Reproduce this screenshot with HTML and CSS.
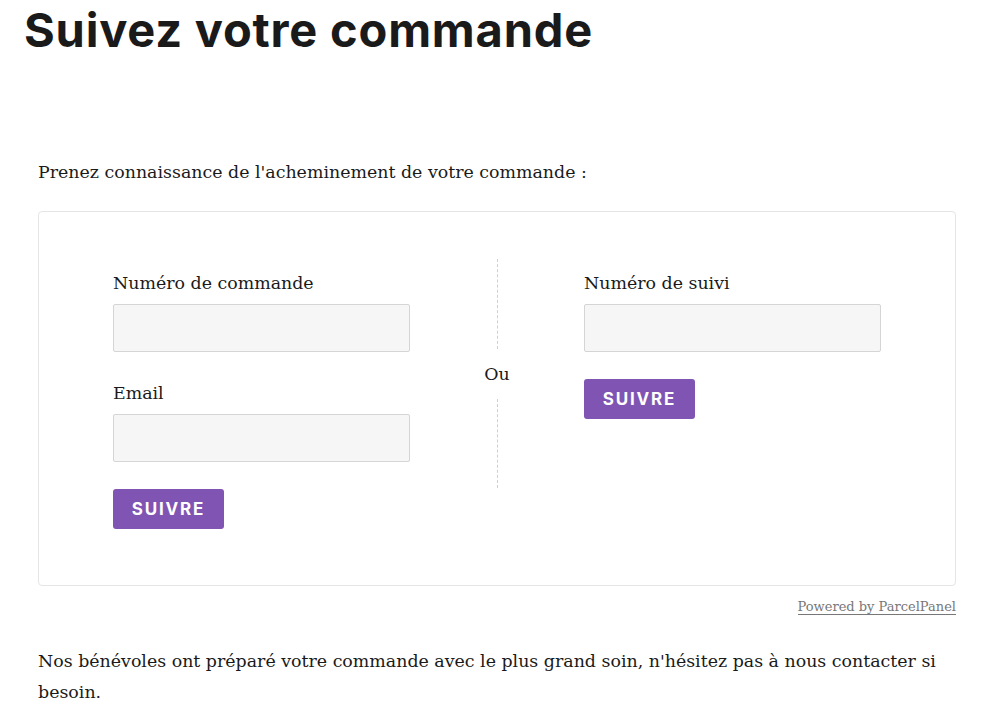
FILE: index.html
```html
<!DOCTYPE html>
<html lang="fr">
<head>
    <meta charset="UTF-8">
    <meta name="viewport" content="width=device-width, initial-scale=1.0">
    <title>Suivez votre commande</title>
    <link rel="stylesheet" href="styles.css">
</head>
<body>
    <h1 class="page-title">Suivez votre commande</h1>

    <div class="content">
        <p class="intro">Prenez connaissance de l'acheminement de votre commande :</p>

        <form class="track-box" onsubmit="return false;">
            <div class="track-col">
                <label class="field">
                    <span class="field-label">Numéro de commande</span>
                    <input type="text" class="field-input">
                </label>
                <label class="field">
                    <span class="field-label">Email</span>
                    <input type="email" class="field-input">
                </label>
                <button class="track-btn">Suivre</button>
            </div>

            <div class="divider">
                <span class="divider-line"></span>
                <span class="divider-text">Ou</span>
                <span class="divider-line"></span>
            </div>

            <div class="track-col">
                <label class="field">
                    <span class="field-label">Numéro de suivi</span>
                    <input type="text" class="field-input">
                </label>
                <button class="track-btn">Suivre</button>
            </div>
        </form>

        <div class="powered">
            <a href="#">Powered by ParcelPanel</a>
        </div>

        <p class="outro">Nos bénévoles ont préparé votre commande avec le plus grand soin, n'hésitez pas à nous contacter si besoin.</p>
    </div>
</body>
</html>
```

FILE: styles.css
```css
body {
    margin: 0;
    font-family: "DejaVu Serif", "Liberation Serif", serif;
    font-size: 17.4px;
    color: #1a1a1a;
    background: #fff;
}
.page-title {
    margin: 0;
    padding: 2px 0 0 24px;
    font-family: Inter, "Open Sans", sans-serif;
    font-weight: 700;
    font-size: 47px;
    letter-spacing: 0.8px;
    line-height: 56px;
    color: #1a1a1a;
}
.content {
    padding: 0 34px 0 38px;
}
.intro {
    margin: 100px 0 0;
    line-height: 28px;
}
.track-box {
    margin-top: 25px;
    height: 375px;
    box-sizing: border-box;
    border: 1px solid #e5e5e5;
    border-radius: 4px;
    padding: 47px 74px 0;
    display: grid;
    grid-template-columns: 297px 1fr 297px;
    align-items: start;
}
.track-col {
    display: flex;
    flex-direction: column;
    align-items: flex-start;
    padding-top: 10px;
}
.field {
    display: flex;
    flex-direction: column;
    width: 100%;
    margin-bottom: 27px;
}
.field-label {
    line-height: 28px;
    margin-bottom: 7px;
}
.field-input {
    box-sizing: border-box;
    width: 100%;
    height: 48px;
    background: #f6f6f6;
    border: 1px solid #d5d5d5;
    border-radius: 2px;
}
.track-btn {
    width: 111px;
    height: 40px;
    border: none;
    border-radius: 3px;
    background: #7f54b3;
    color: #fff;
    font-family: Inter, "Open Sans", sans-serif;
    font-weight: 700;
    font-size: 17px;
    letter-spacing: 1.8px;
    text-transform: uppercase;
    cursor: pointer;
}
.divider {
    display: flex;
    flex-direction: column;
    align-items: center;
    height: 229px;
}
.divider-line {
    flex: 1;
    border-left: 1px dashed #cfcfcf;
}
.divider-text {
    padding: 12px 0;
    line-height: 26px;
}
.powered {
    text-align: right;
    margin-top: 12px;
    font-size: 13px;
    line-height: 18px;
}
.powered a {
    color: #777;
    text-decoration: none;
    border-bottom: 1px solid #777;
}
.outro {
    margin: 30px 0 0;
    line-height: 31px;
}
```
